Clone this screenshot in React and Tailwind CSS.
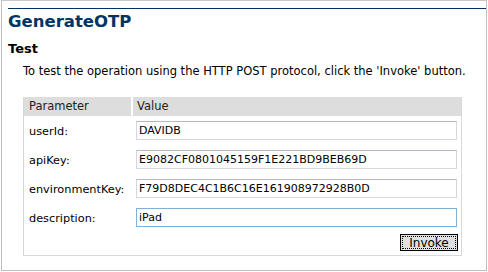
import React from 'react';

const PARAMS = [
  { name: 'userId', value: 'DAVIDB' },
  { name: 'apiKey', value: 'E9082CF0801045159F1E221BD9BEB69D' },
  { name: 'environmentKey', value: 'F79D8DEC4C1B6C16E161908972928B0D' },
  { name: 'description', value: 'iPad', focused: true },
];

function ParamRow({ name, value, focused }) {
  return (
    <div className="flex items-center h-[29px]">
      <div className="w-[109px] pl-[5px] pt-[2px] text-[11.3px] leading-[17px] text-black">{name}:</div>
      <div className="flex-1 pl-[3px] pr-[4px]">
        <input
          readOnly
          defaultValue={value}
          className={
            'block w-full h-[19px] px-[2px] text-[11px] leading-[17px] text-black bg-white outline-none border ' +
            (focused ? 'border-[#7fb1d8]' : 'border-[#d6d6de] border-t-[#b8b8c0]')
          }
        />
      </div>
    </div>
  );
}

export default function App() {
  return (
    <div className="w-[488px] h-[272px] bg-white pl-px font-['DejaVu_Sans',Verdana,sans-serif]">
      <div className="w-[486px] h-[271px] border border-t-[#c8c8c8] border-[#bdbdbd] border-r-[#c0c0c0]">
        <div className="ml-[6px] mt-[7px] border-t border-[#003366]" />
        <h1 className="ml-[6px] mt-[3px] text-[16.5px] leading-[20px] font-bold text-[#003366]">GenerateOTP</h1>
        <h2 className="ml-[6px] mt-[9px] text-[13px] leading-[16px] font-bold text-black">Test</h2>
        <p className="ml-[21px] mt-[7px] text-[11.5px] leading-[14px] text-black">
          To test the operation using the HTTP POST protocol, click the 'Invoke' button.
        </p>
        <div className="ml-[21px] mt-[19px] w-[439px] border-x border-b border-[#d8d8d8] pb-[4px]">
          <div className="flex h-[19px] text-[11.5px] text-[#222]">
            <div className="w-[107px] bg-[#dddddd] pl-[5px] flex items-center">Parameter</div>
            <div className="w-[2px] bg-white" />
            <div className="flex-1 bg-[#dddddd] pl-[4px] flex items-center">Value</div>
          </div>
          <div>
            {PARAMS.map((p) => (
              <ParamRow key={p.name} {...p} />
            ))}
          </div>
          <div className="flex justify-end pr-[3px] pt-[2px]">
            <button className="w-[58px] h-[17px] border border-black bg-[#e0e0e0] p-px">
              <span className="flex items-center justify-center w-full h-full border border-dotted border-black text-[12px] leading-none text-black">
                Invoke
              </span>
            </button>
          </div>
        </div>
      </div>
    </div>
  );
}
